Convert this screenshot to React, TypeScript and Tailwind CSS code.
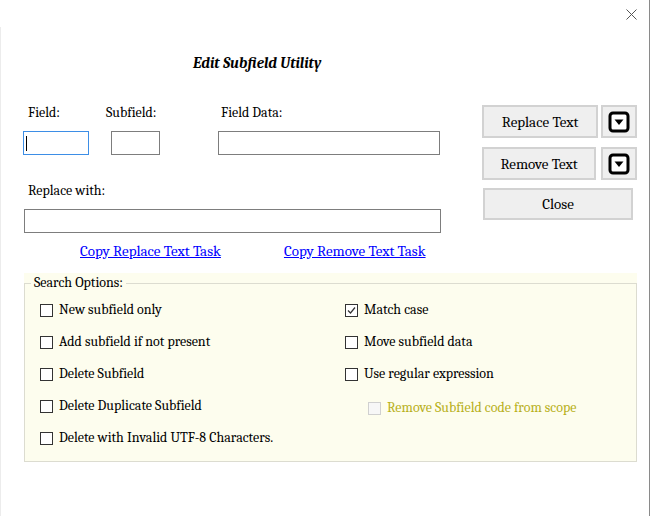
import { useState } from "react";

function DropIcon() {
  return (
    <svg width="22" height="22" viewBox="0 0 22 22">
      <rect x="2" y="2" width="18" height="18" rx="3" fill="#fff" stroke="#000" strokeWidth="3" />
      <path d="M6.5 8.5 H15.5 L11 14 Z" fill="#000" />
    </svg>
  );
}

function Check({ label, checked, disabled, onChange }: { label: string; checked: boolean; disabled?: boolean; onChange: () => void }) {
  return (
    <label className="flex items-center gap-[6px] h-[32px]">
      <span
        onClick={disabled ? undefined : onChange}
        className={`w-[13px] h-[13px] border flex items-center justify-center ${disabled ? "border-[#d0d0d0] bg-[#f7f7f7]" : "border-[#333] bg-white"}`}
      >
        {checked && (
          <svg width="11" height="11" viewBox="0 0 11 11">
            <path d="M2 5.5 L4.5 8 L9 2.5" fill="none" stroke="#333" strokeWidth="1.2" />
          </svg>
        )}
      </span>
      <span className={disabled ? "text-[#b8b020]" : "text-black"}>{label}</span>
    </label>
  );
}

export default function App() {
  const [opts, setOpts] = useState<Record<string, boolean>>({ match: true });
  const toggle = (k: string) => setOpts((o) => ({ ...o, [k]: !o[k] }));

  return (
    <div className="w-[650px] h-[516px] bg-white border-r border-[#8a8a8a] text-[14px] leading-[16px] text-black font-serif">
      {/* Title bar */}
      <div className="h-[27px] flex justify-end items-center pr-[12px] pt-[1px]">
        <svg width="11" height="11" viewBox="0 0 11 11">
          <path d="M0.5 0.5 L10.5 10.5 M10.5 0.5 L0.5 10.5" stroke="#555" strokeWidth="1" />
        </svg>
      </div>

      <div className="h-[489px] border-l border-[#ececec] pl-[22px]">
        <div className="pt-[28px] pl-[170px] font-bold italic text-[15px]">Edit Subfield Utility</div>

        <div className="flex mt-[34px]">
          {/* Left column */}
          <div className="w-[418px]">
            <div className="flex">
              <div className="w-[66px]">
                <div className="pl-[5px]">Field:</div>
                <div className="mt-[10px] h-[24px] border border-[#3d8ee6] flex items-center pl-[2px]">
                  <span className="w-px h-[15px] bg-black" />
                </div>
              </div>
              <div className="ml-[17px] w-[54px]">
                <div>Subfield:</div>
                <div className="mt-[10px] ml-[5px] w-[49px] h-[24px] border border-[#7d7d7d]" />
              </div>
              <div className="ml-[58px] w-[222px]">
                <div className="pl-[3px]">Field Data:</div>
                <div className="mt-[10px] h-[24px] border border-[#7d7d7d]" />
              </div>
            </div>

            <div className="mt-[28px] pl-[5px]">Replace with:</div>
            <div className="mt-[10px] ml-[1px] h-[24px] border border-[#7d7d7d]" />

            <div className="mt-[10px] flex text-[15px]">
              <a href="#" className="ml-[57px] text-[#0000ff] underline">Copy Replace Text Task</a>
              <a href="#" className="ml-[63px] text-[#0000ff] underline">Copy Remove Text Task</a>
            </div>
          </div>

          {/* Right column */}
          <div className="ml-[41px] flex flex-col text-[15px]">
            <div className="flex gap-[3px]">
              <button className="w-[116px] h-[33px] bg-[#efefef] border-2 border-[#d2d2d2]">Replace Text</button>
              <button className="w-[36px] h-[33px] bg-[#efefef] border-2 border-[#d2d2d2] flex items-center justify-center">
                <DropIcon />
              </button>
            </div>
            <div className="flex gap-[5px] mt-[9px]">
              <button className="w-[114px] h-[33px] bg-[#efefef] border-2 border-[#d2d2d2]">Remove Text</button>
              <button className="w-[36px] h-[33px] bg-[#efefef] border-2 border-[#d2d2d2] flex items-center justify-center">
                <DropIcon />
              </button>
            </div>
            <button className="mt-[8px] ml-[1px] w-[150px] h-[32px] bg-[#efefef] border-2 border-[#d2d2d2]">Close</button>
          </div>
        </div>

        {/* Search options group */}
        <div className="mt-[14px] ml-[1px] w-[613px] bg-[#fdfdee] pt-[2px]">
          <fieldset className="border border-[#dcdcd0] h-[187px] pl-[15px] pt-[3px] m-0">
            <legend className="-ml-[9px] px-[3px]">Search Options:</legend>
            <div className="flex">
              <div className="w-[305px]">
                <Check label="New subfield only" checked={!!opts.newOnly} onChange={() => toggle("newOnly")} />
                <Check label="Add subfield if not present" checked={!!opts.add} onChange={() => toggle("add")} />
                <Check label="Delete Subfield" checked={!!opts.del} onChange={() => toggle("del")} />
                <Check label="Delete Duplicate Subfield" checked={!!opts.dup} onChange={() => toggle("dup")} />
                <Check label="Delete with Invalid UTF-8 Characters." checked={!!opts.utf} onChange={() => toggle("utf")} />
              </div>
              <div>
                <Check label="Match case" checked={!!opts.match} onChange={() => toggle("match")} />
                <Check label="Move subfield data" checked={!!opts.move} onChange={() => toggle("move")} />
                <Check label="Use regular expression" checked={!!opts.regex} onChange={() => toggle("regex")} />
                <div className="pl-[23px] pt-[2px]">
                  <Check label="Remove Subfield code from scope" checked={false} disabled onChange={() => {}} />
                </div>
              </div>
            </div>
          </fieldset>
        </div>
      </div>
    </div>
  );
}
